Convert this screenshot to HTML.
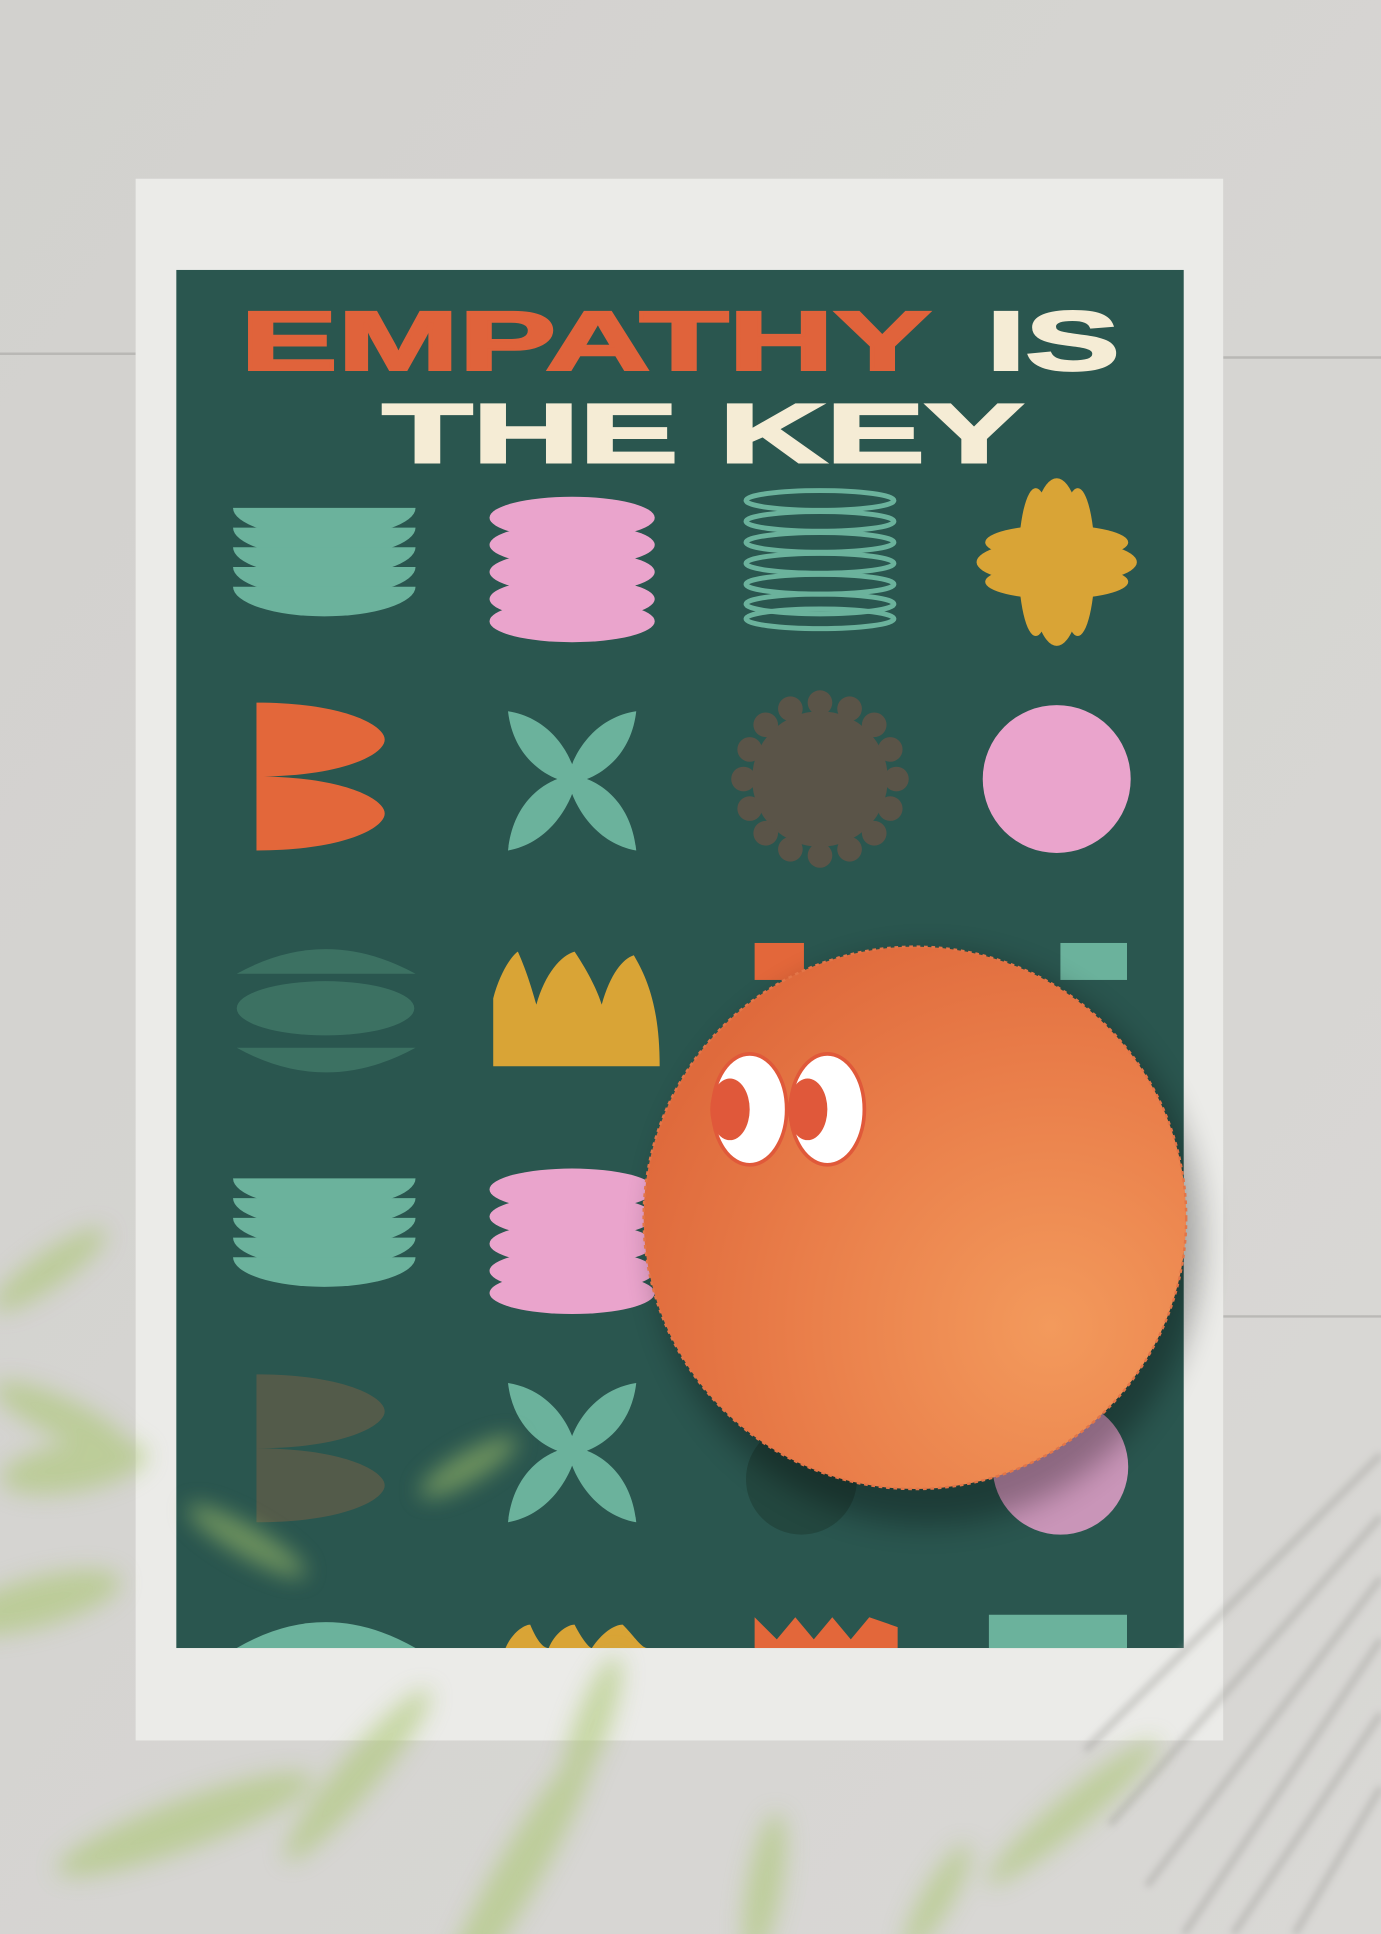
<!DOCTYPE html>
<html><head><meta charset="utf-8"><style>
html,body{margin:0;padding:0;width:1381px;height:1934px;overflow:hidden;background:#d6d5d2}
svg{display:block}
</style></head><body>
<svg width="1381" height="1934" viewBox="0 0 1120 1569" preserveAspectRatio="none" xmlns="http://www.w3.org/2000/svg">
<defs>
<filter id="b8"><feGaussianBlur stdDeviation="9"/></filter>
<filter id="b4"><feGaussianBlur stdDeviation="3"/></filter>
<filter id="b14"><feGaussianBlur stdDeviation="12"/></filter>
<radialGradient id="ball" cx="0.75" cy="0.7" r="0.8"><stop offset="0" stop-color="#f39a5c"/><stop offset="0.6" stop-color="#e97d49"/><stop offset="1" stop-color="#df6a3c"/></radialGradient>
<linearGradient id="wall" x1="0" y1="0" x2="1" y2="1"><stop offset="0" stop-color="#d2d1ce"/><stop offset="1" stop-color="#d9d8d5"/></linearGradient>
<g id="stack"><path d="M-74,0 L74,0 A74,24 0 0 1 -74,0Z"/><path d="M-74,16 L74,16 A74,24 0 0 1 -74,16Z"/><path d="M-74,32 L74,32 A74,24 0 0 1 -74,32Z"/><path d="M-74,48 L74,48 A74,24 0 0 1 -74,48Z"/><path d="M-74,64 L74,64 A74,24 0 0 1 -74,64Z"/></g>
<g id="pstack"><ellipse cx="0" cy="0" rx="67" ry="17"/><ellipse cx="0" cy="22" rx="67" ry="17"/><ellipse cx="0" cy="44" rx="67" ry="17"/><ellipse cx="0" cy="66" rx="67" ry="17"/><ellipse cx="0" cy="84" rx="67" ry="17"/></g>
<path id="xs" d="M-52,-55 C-20,-50 -5,-25 0,-12 C5,-25 20,-50 52,-55 C48,-20 25,-5 12,0 C25,5 48,20 52,58 C20,52 5,25 0,12 C-5,25 -20,52 -52,58 C-48,20 -25,5 -12,0 C-25,-5 -48,-20 -52,-55Z"/>
<path id="bs" d="M0,0 C70,0 104,18 104,30 C104,42 70,60 0,60 Z M0,60 C70,60 104,78 104,90 C104,102 70,120 0,120 Z"/>
</defs>
<rect width="1120" height="1569" fill="url(#wall)"/>
<line x1="0" y1="287" x2="110" y2="287" stroke="#b9b8b5" stroke-width="2"/>
<line x1="992" y1="290" x2="1120" y2="290" stroke="#b9b8b5" stroke-width="2"/>
<line x1="992" y1="1068" x2="1120" y2="1068" stroke="#bab9b6" stroke-width="2"/>
<rect x="110" y="145" width="882" height="1267" fill="#ebebe8"/>
<rect x="143" y="219" width="817" height="1118" fill="#2a564f"/>
<text x="195" y="300" font-family="Liberation Sans, sans-serif" font-weight="bold" font-size="68" fill="#e0633b" stroke="#e0633b" stroke-width="2" textLength="560" lengthAdjust="spacingAndGlyphs">EMPATHY</text>
<text x="800" y="300" font-family="Liberation Sans, sans-serif" font-weight="bold" font-size="68" fill="#f5ecd5" stroke="#f5ecd5" stroke-width="2" textLength="108" lengthAdjust="spacingAndGlyphs">IS</text>
<text x="310" y="375" font-family="Liberation Sans, sans-serif" font-weight="bold" font-size="68" fill="#f5ecd5" stroke="#f5ecd5" stroke-width="2" textLength="520" lengthAdjust="spacingAndGlyphs">THE KEY</text>
<use href="#stack" x="263" y="412" fill="#6bb29c"/>
<use href="#pstack" x="464" y="420" fill="#eaa4cc"/>
<g fill="none" stroke="#6bb29c" stroke-width="4"><ellipse cx="665" cy="406" rx="60" ry="8"/><ellipse cx="665" cy="423" rx="60" ry="8"/><ellipse cx="665" cy="440" rx="60" ry="8"/><ellipse cx="665" cy="457" rx="60" ry="8"/><ellipse cx="665" cy="474" rx="60" ry="8"/><ellipse cx="665" cy="490" rx="60" ry="8"/><ellipse cx="665" cy="502" rx="60" ry="8"/></g>
<g fill="#d9a436"><ellipse cx="857" cy="456" rx="65" ry="18"/><ellipse cx="857" cy="456" rx="22" ry="68"/><ellipse cx="840" cy="456" rx="14" ry="60"/><ellipse cx="874" cy="456" rx="14" ry="60"/><ellipse cx="857" cy="440" rx="58" ry="14"/><ellipse cx="857" cy="472" rx="58" ry="14"/></g>
<use href="#bs" x="208" y="570" fill="#e3673a"/>
<use href="#xs" x="464" y="632" fill="#6bb29c"/>
<g fill="#5a5448"><circle cx="665" cy="632" r="55"/>
<circle cx="665" cy="570" r="10"/><circle cx="665" cy="694" r="10"/><circle cx="603" cy="632" r="10"/><circle cx="727" cy="632" r="10"/><circle cx="709" cy="588" r="10"/><circle cx="621" cy="588" r="10"/><circle cx="709" cy="676" r="10"/><circle cx="621" cy="676" r="10"/><circle cx="689" cy="575" r="10"/><circle cx="641" cy="575" r="10"/><circle cx="689" cy="689" r="10"/><circle cx="641" cy="689" r="10"/><circle cx="722" cy="608" r="10"/><circle cx="608" cy="608" r="10"/><circle cx="722" cy="656" r="10"/><circle cx="608" cy="656" r="10"/></g>
<circle cx="857" cy="632" r="60" fill="#eaa4cc"/>
<g fill="#3e7565" opacity="0.9"><path d="M192,790 Q264,750 337,790Z"/><ellipse cx="264" cy="818" rx="72" ry="22"/><path d="M192,850 Q264,890 337,850Z"/></g>
<path d="M400,865 L400,810 C405,790 415,775 420,772 C428,790 432,805 435,815 C442,790 455,775 466,772 C478,790 485,805 488,815 C495,790 505,778 514,775 C526,795 535,820 535,865Z" fill="#d9a436"/>
<rect x="612" y="765" width="40" height="30" fill="#e3673a"/><rect x="860" y="765" width="54" height="30" fill="#6bb29c"/>
<use href="#stack" x="263" y="956" fill="#6bb29c"/>
<use href="#pstack" x="464" y="965" fill="#eaa4cc"/>
<use href="#bs" x="208" y="1115" fill="#5e5c48" opacity="0.8"/>
<use href="#xs" x="464" y="1177" fill="#6bb29c"/>
<circle cx="860" cy="1190" r="55" fill="#c995b8"/>
<circle cx="650" cy="1200" r="45" fill="#23473f"/>
<path d="M192,1337 Q264,1295 337,1337Z" fill="#6bb29c"/>
<path d="M410,1337 C415,1325 425,1318 430,1318 C435,1330 440,1337 445,1337 C450,1325 460,1318 466,1318 C472,1330 478,1337 480,1337 C488,1325 498,1318 505,1318 C515,1328 520,1337 525,1337Z" fill="#d9a436"/>
<path d="M612,1337 L612,1312 L630,1330 L645,1312 L660,1330 L675,1312 L690,1330 L705,1312 L728,1320 L728,1337Z" fill="#e3673a"/>
<rect x="802" y="1310" width="112" height="27" fill="#6bb29c"/>
<ellipse cx="752" cy="1005" rx="222" ry="232" fill="#000" opacity="0.3" filter="url(#b14)"/>
<circle cx="742" cy="988" r="220" fill="url(#ball)" stroke="#e27548" stroke-width="2" stroke-dasharray="3 3"/>
<g stroke="#e0593a" stroke-width="3"><ellipse cx="608" cy="900" rx="30" ry="45" fill="#fff"/><ellipse cx="671" cy="900" rx="30" ry="45" fill="#fff"/></g>
<ellipse cx="592" cy="900" rx="16" ry="25" fill="#e0583a"/><ellipse cx="655" cy="900" rx="16" ry="25" fill="#e0583a"/>
<g stroke="#9e9d99" stroke-width="5" opacity="0.5" filter="url(#b4)">
<line x1="1120" y1="1180" x2="880" y2="1420"/><line x1="1120" y1="1230" x2="900" y2="1480"/><line x1="1120" y1="1280" x2="930" y2="1530"/><line x1="1120" y1="1330" x2="960" y2="1569"/><line x1="1120" y1="1390" x2="1000" y2="1569"/><line x1="1120" y1="1450" x2="1050" y2="1569"/>
</g>
<g fill="#a8c66c" opacity="0.55" filter="url(#b8)">
<ellipse cx="40" cy="1030" rx="55" ry="14" transform="rotate(-35 40 1030)"/>
<ellipse cx="50" cy="1150" rx="60" ry="16" transform="rotate(25 50 1150)"/>
<ellipse cx="60" cy="1190" rx="60" ry="20" transform="rotate(-10 60 1190)"/>
<ellipse cx="30" cy="1300" rx="70" ry="20" transform="rotate(-15 30 1300)"/>
<ellipse cx="200" cy="1250" rx="55" ry="12" transform="rotate(30 200 1250)"/>
<ellipse cx="380" cy="1190" rx="45" ry="12" transform="rotate(-30 380 1190)"/>
<ellipse cx="290" cy="1440" rx="90" ry="16" transform="rotate(-50 290 1440)"/>
<ellipse cx="480" cy="1400" rx="60" ry="14" transform="rotate(-70 480 1400)"/>
<ellipse cx="150" cy="1480" rx="110" ry="20" transform="rotate(-20 150 1480)"/>
<ellipse cx="420" cy="1520" rx="120" ry="18" transform="rotate(-60 420 1520)"/>
<ellipse cx="620" cy="1530" rx="60" ry="14" transform="rotate(-80 620 1530)"/>
<ellipse cx="870" cy="1470" rx="90" ry="14" transform="rotate(-40 870 1470)"/>
<ellipse cx="760" cy="1540" rx="50" ry="12" transform="rotate(-60 760 1540)"/>
</g>
</svg>
</body></html>
